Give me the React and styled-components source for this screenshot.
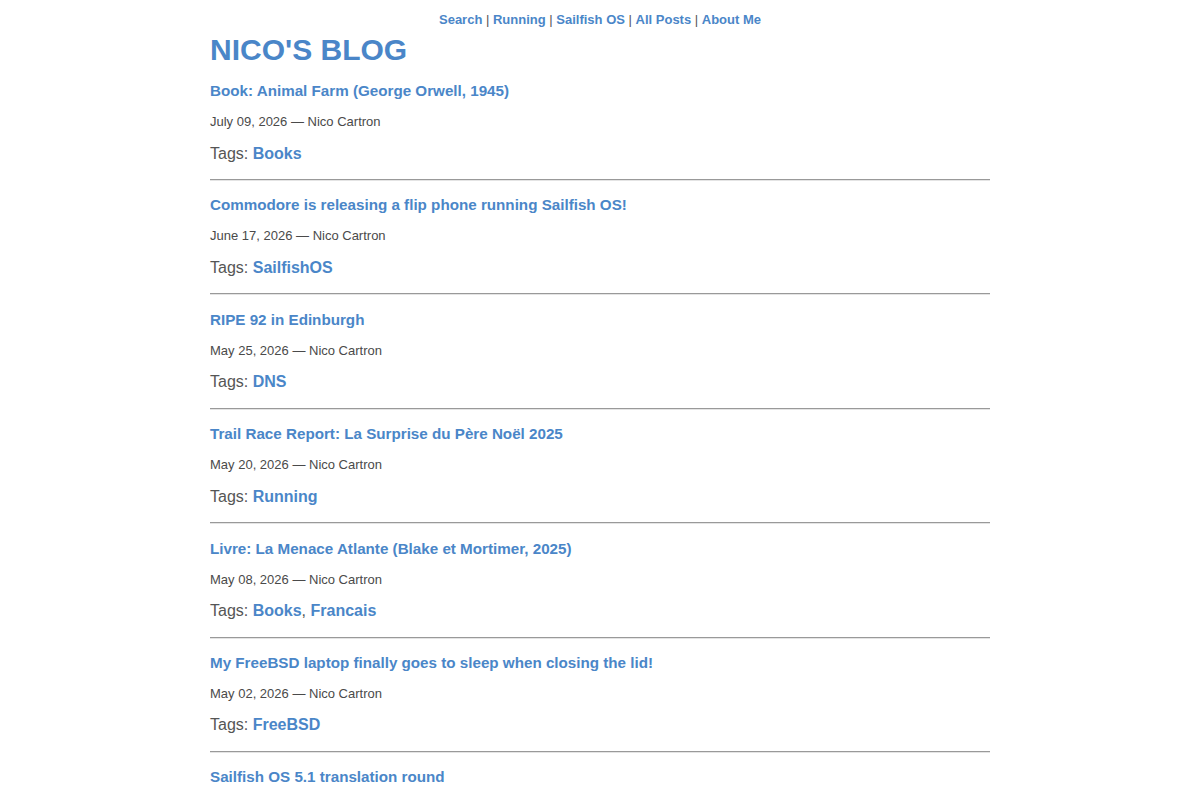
import React from "react";
import styled, { createGlobalStyle } from "styled-components";

const GlobalStyle = createGlobalStyle`
  html, body {
    margin: 0;
    padding: 0;
    background: #ffffff;
  }
  body {
    font-family: "Liberation Sans", Arial, sans-serif;
    color: #4a4a4a;
  }
`;

const Page = styled.div`
  width: 780px;
  margin: 0 auto;
  padding-top: 12px;
`;

const Nav = styled.nav`
  text-align: center;
  font-size: 13px;
  line-height: 16px;
  color: #555;
`;

const NavLink = styled.a`
  color: #4a86c8;
  font-weight: bold;
  text-decoration: none;
`;

const Title = styled.h1`
  margin: 4px 0 0;
  font-size: 30px;
  line-height: 36px;
  font-weight: bold;
  color: #4a86c8;
`;

const PostList = styled.div`
  display: flex;
  flex-direction: column;
  padding-top: 14px;
`;

const Post = styled.article`
  display: flex;
  flex-direction: column;
`;

const PostTitle = styled.a`
  display: block;
  font-size: 15.2px;
  line-height: 17px;
  font-weight: bold;
  color: #4a86c8;
  text-decoration: none;
`;

const Meta = styled.div`
  margin-top: 15px;
  font-size: 13px;
  line-height: 15px;
  color: #4a4a4a;
`;

const Tags = styled.div`
  margin-top: 15.5px;
  font-size: 16px;
  line-height: 18px;
  color: #555;
`;

const TagLink = styled.a`
  color: #4a86c8;
  font-weight: bold;
  text-decoration: none;
`;

const Divider = styled.hr`
  margin: 16.5px 0 15.4px;
  border: none;
  border-top: 1px solid #999;
  border-bottom: 1px solid #e4e4e4;
  height: 0;
`;

const navItems = ["Search", "Running", "Sailfish OS", "All Posts", "About Me"];

const posts = [
  { title: "Book: Animal Farm (George Orwell, 1945)", date: "July 09, 2026", tags: ["Books"] },
  { title: "Commodore is releasing a flip phone running Sailfish OS!", date: "June 17, 2026", tags: ["SailfishOS"] },
  { title: "RIPE 92 in Edinburgh", date: "May 25, 2026", tags: ["DNS"] },
  { title: "Trail Race Report: La Surprise du Père Noël 2025", date: "May 20, 2026", tags: ["Running"] },
  { title: "Livre: La Menace Atlante (Blake et Mortimer, 2025)", date: "May 08, 2026", tags: ["Books", "Francais"] },
  { title: "My FreeBSD laptop finally goes to sleep when closing the lid!", date: "May 02, 2026", tags: ["FreeBSD"] },
  { title: "Sailfish OS 5.1 translation round", date: "April 28, 2026", tags: ["SailfishOS"] },
];

export default function App() {
  return (
    <>
      <GlobalStyle />
      <Page>
        <Nav>
          {navItems.map((item, i) => (
            <React.Fragment key={item}>
              {i > 0 && " | "}
              <NavLink href="#">{item}</NavLink>
            </React.Fragment>
          ))}
        </Nav>
        <Title>NICO'S BLOG</Title>
        <PostList>
          {posts.map((p) => (
            <Post key={p.title}>
              <PostTitle href="#">{p.title}</PostTitle>
              <Meta>{p.date} — Nico Cartron</Meta>
              <Tags>
                Tags:{" "}
                {p.tags.map((t, i) => (
                  <React.Fragment key={t}>
                    {i > 0 && ", "}
                    <TagLink href="#">{t}</TagLink>
                  </React.Fragment>
                ))}
              </Tags>
              <Divider />
            </Post>
          ))}
        </PostList>
      </Page>
    </>
  );
}
